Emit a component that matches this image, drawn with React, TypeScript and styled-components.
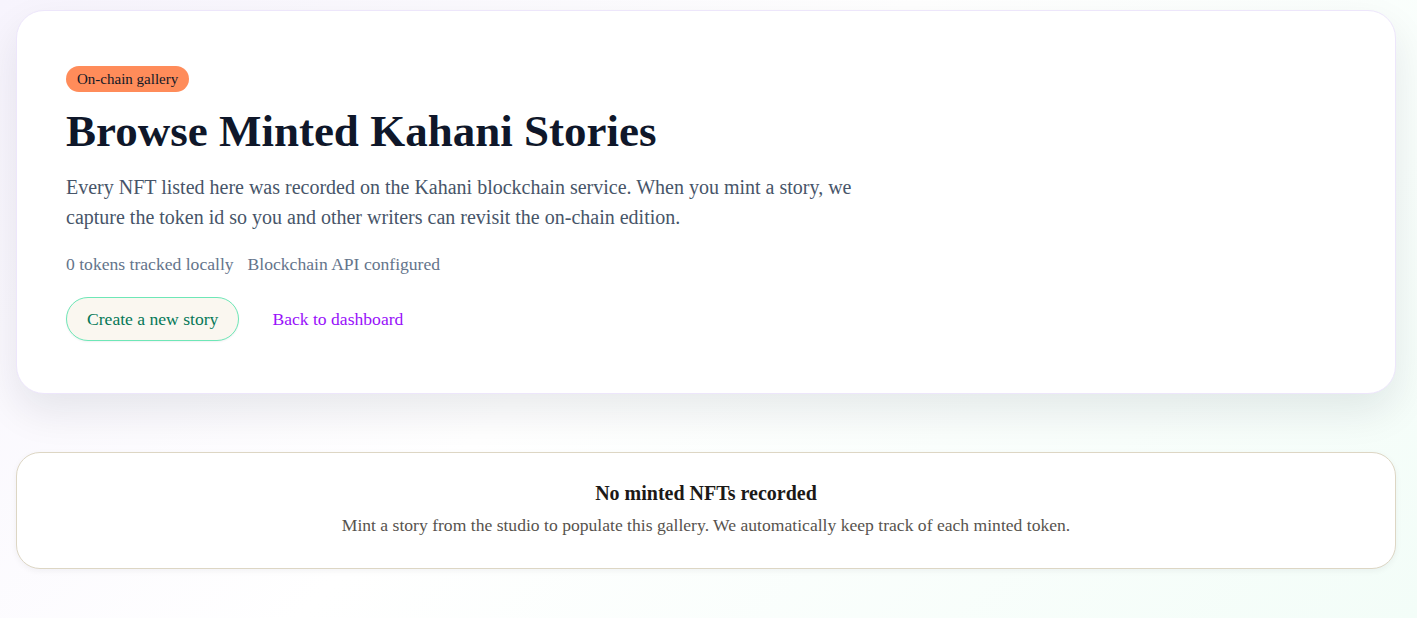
import React from "react";
import styled, { createGlobalStyle } from "styled-components";

const Global = createGlobalStyle`
  html, body { margin: 0; padding: 0; }
  body {
    font-family: "Liberation Serif", "Times New Roman", serif;
    background: linear-gradient(135deg, #f7f4fd 0%, #ffffff 45%, #f3fdf8 100%);
    min-height: 618px;
  }
`;

const Page = styled.main`
  display: flex;
  flex-direction: column;
  gap: 58px;
  padding: 10px 21px 40px 16px;
  min-height: 618px;
  box-sizing: border-box;
`;

const Hero = styled.section`
  background: #ffffff;
  border: 1px solid #ede6fb;
  border-radius: 28px;
  padding: 55px 49px 52px;
  box-shadow: 0 18px 40px rgba(15, 23, 42, 0.09);
  display: flex;
  flex-direction: column;
  align-items: flex-start;
`;

const Badge = styled.span`
  display: inline-flex;
  align-items: center;
  height: 26px;
  padding: 0 11px;
  border-radius: 999px;
  background: #ff8c5a;
  color: #111827;
  font-size: 15px;
`;

const Title = styled.h1`
  margin: 12px 0 0;
  font-size: 45px;
  line-height: 1.2;
  font-weight: 700;
  color: #0f172a;
`;

const Lead = styled.p`
  margin: 14px 0 0;
  max-width: 830px;
  font-size: 20px;
  line-height: 30px;
  color: #475569;
`;

const Meta = styled.div`
  display: flex;
  gap: 14px;
  margin-top: 22px;
  font-size: 17.6px;
  color: #64748b;
`;

const Actions = styled.div`
  display: flex;
  align-items: center;
  gap: 33px;
  margin-top: 22px;
`;

const PrimaryButton = styled.button`
  height: 44px;
  padding: 0 20px;
  border-radius: 999px;
  border: 1px solid #6ee7b7;
  background: #faf7f0;
  color: #047857;
  font-family: inherit;
  font-size: 17.6px;
  box-shadow: 0 1px 2px rgba(15, 23, 42, 0.06);
  cursor: pointer;
`;

const TextLink = styled.a`
  color: #9810fa;
  font-size: 17.6px;
  text-decoration: none;
`;

const Empty = styled.section`
  background: #ffffff;
  border: 1px solid #ddd6c4;
  border-radius: 24px;
  padding: 27px 24px 30px;
  text-align: center;
  box-shadow: 0 2px 6px rgba(15, 23, 42, 0.05);
`;

const EmptyTitle = styled.h2`
  margin: 0;
  font-size: 20px;
  line-height: 26px;
  font-weight: 700;
  color: #1c1917;
`;

const EmptyText = styled.p`
  margin: 6px 0 0;
  font-size: 17.6px;
  line-height: 26px;
  color: #57534e;
`;

export default function App() {
  return (
    <>
      <Global />
      <Page>
        <Hero>
          <Badge>On-chain gallery</Badge>
          <Title>Browse Minted Kahani Stories</Title>
          <Lead>
            Every NFT listed here was recorded on the Kahani blockchain service. When you mint a story, we
            capture the token id so you and other writers can revisit the on-chain edition.
          </Lead>
          <Meta>
            <span>0 tokens tracked locally</span>
            <span>Blockchain API configured</span>
          </Meta>
          <Actions>
            <PrimaryButton>Create a new story</PrimaryButton>
            <TextLink href="#">Back to dashboard</TextLink>
          </Actions>
        </Hero>
        <Empty>
          <EmptyTitle>No minted NFTs recorded</EmptyTitle>
          <EmptyText>
            Mint a story from the studio to populate this gallery. We automatically keep track of each minted token.
          </EmptyText>
        </Empty>
      </Page>
    </>
  );
}
